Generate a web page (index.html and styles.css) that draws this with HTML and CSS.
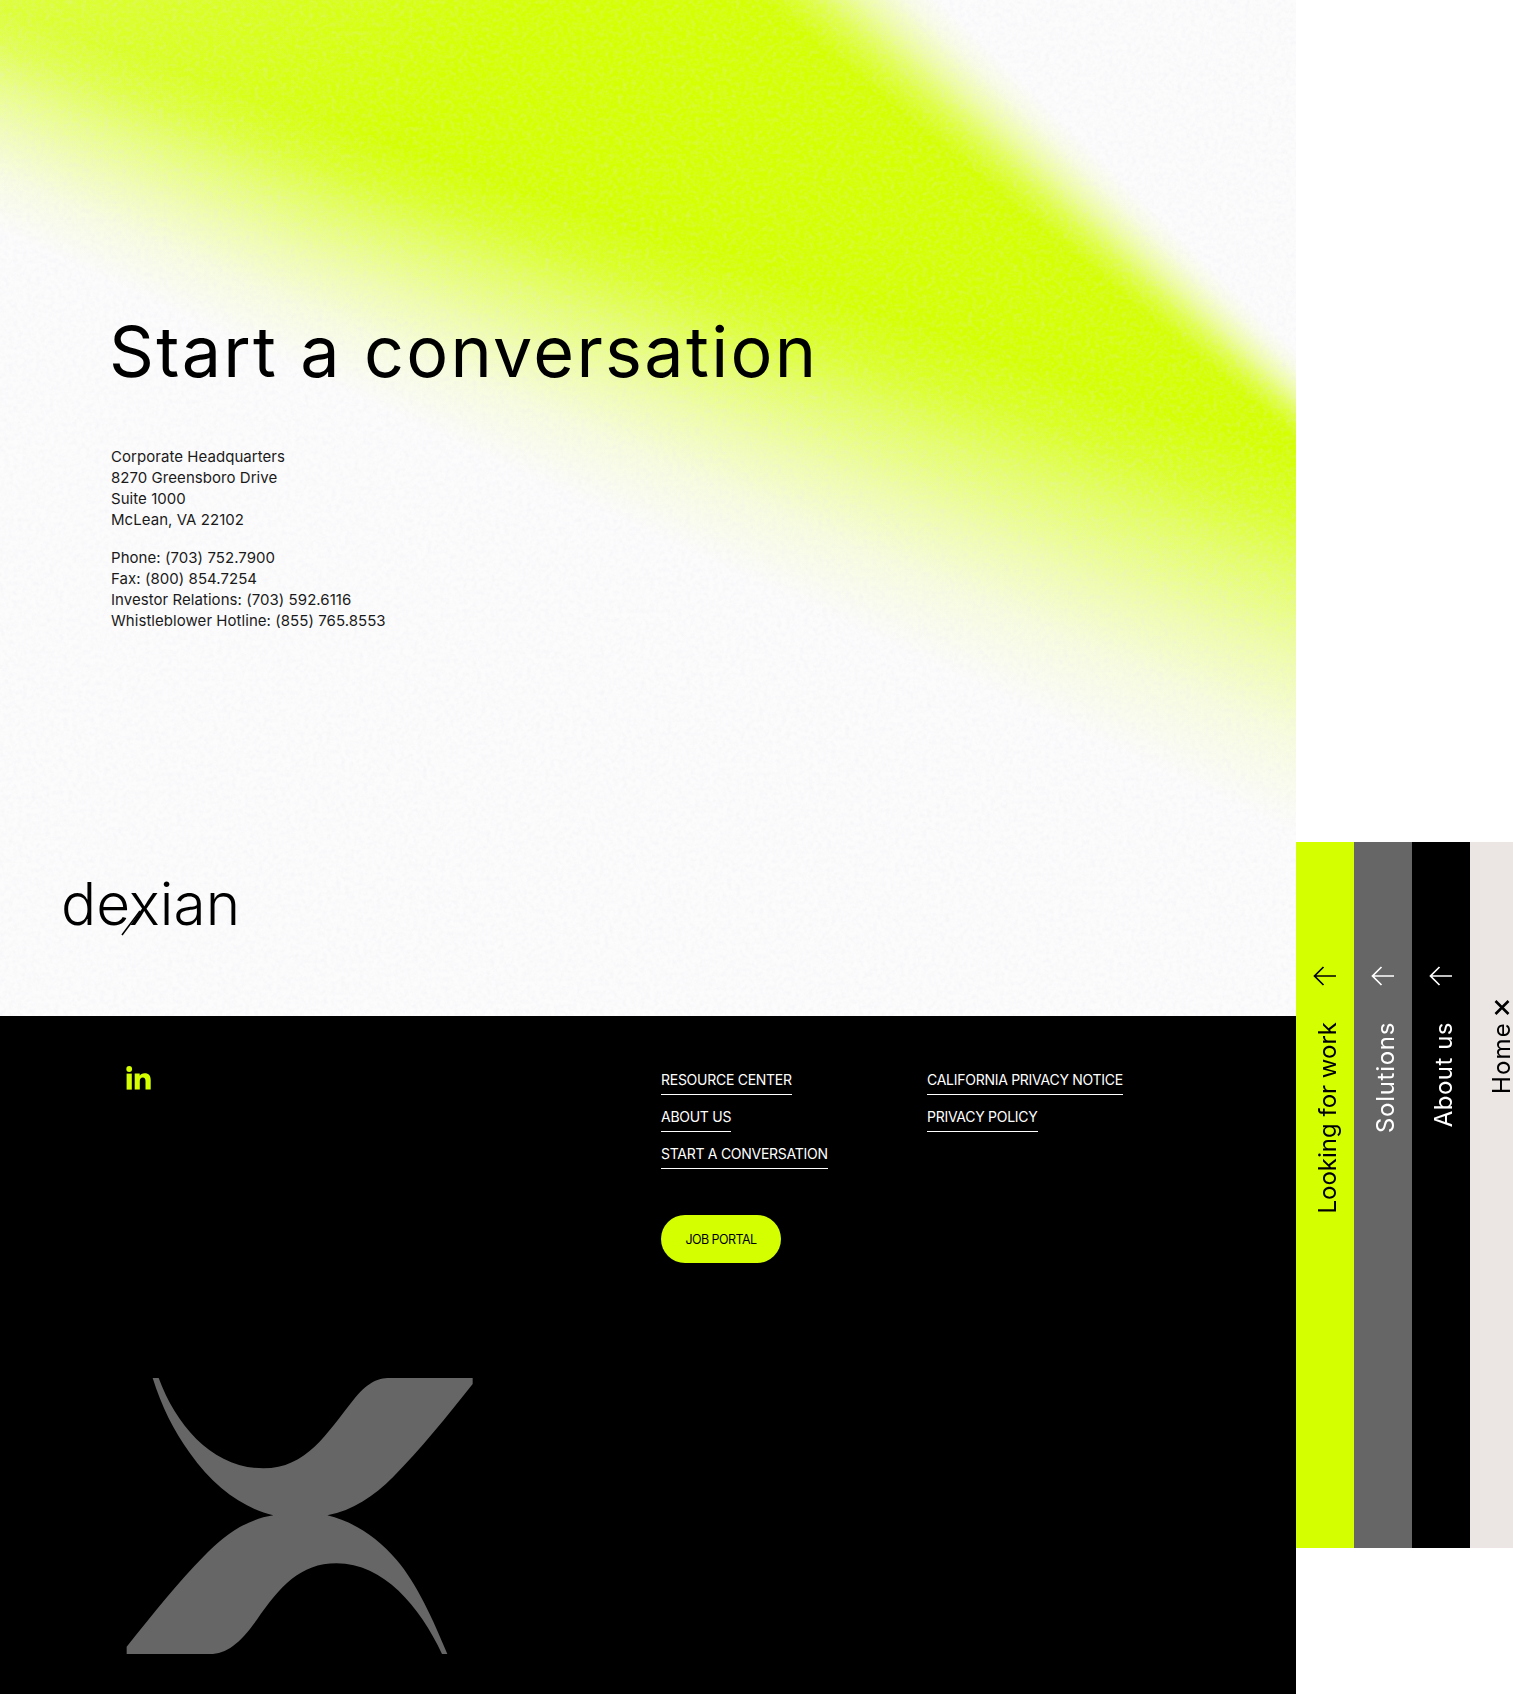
FILE: index.html
```html
<!DOCTYPE html>
<html lang="en">
<head>
<meta charset="utf-8">
<title>Start a conversation | Dexian</title>
<link rel="stylesheet" href="styles.css">
</head>
<body>
<div class="page">
  <main class="main">
    <section class="hero">
      <svg class="grain" aria-hidden="true">
        <filter id="grain-filter" x="0" y="0" width="100%" height="100%">
          <feTurbulence type="fractalNoise" baseFrequency="0.22" numOctaves="3" seed="4"/>
          <feColorMatrix type="matrix" values="0 0 0 0 0.8  0 0 0 0 0.8  0 0 0 0 0.84  0.9 0.9 0 0 -0.72"/>
        </filter>
        <rect width="100%" height="100%" filter="url(#grain-filter)"/>
      </svg>
      <div class="hero-body">
        <h1 class="title">Start a conversation</h1>
        <p class="info">Corporate Headquarters<br>8270 Greensboro Drive<br>Suite 1000<br>McLean, VA 22102</p>
        <p class="info">Phone: (703) 752.7900<br>Fax: (800) 854.7254<br>Investor Relations: (703) 592.6116<br>Whistleblower Hotline: (855) 765.8553</p>
      </div>
      <div class="logo">
        <span class="logo-text">dexian</span>
        <svg class="logo-slash" viewBox="0 0 20 26" aria-hidden="true"><path d="M1 25 L19 1" stroke="#000" stroke-width="1.500" fill="none"/></svg>
      </div>
    </section>
    <footer class="footer">
      <div class="footer-top">
        <a class="social" href="#" aria-label="LinkedIn">
          <svg viewBox="0 0 25 24" width="25" height="24">
            <circle cx="3.2" cy="3" r="2.9" fill="#d4ff00"/>
            <rect x="0.6" y="7.6" width="5.2" height="16" fill="#d4ff00"/>
            <path d="M8.7 7.6h5v2.2c.9-1.600 2.600-2.600 4.900-2.600 4.300 0 6.100 2.600 6.100 6.800v9.600h-5.200v-8.700c0-2.200-.8-3.500-2.700-3.500-2 0-3 1.400-3 3.600v8.600h-5.100z" fill="#d4ff00"/>
          </svg>
        </a>
        <div class="footer-links">
          <ul class="link-col">
            <li><a href="#">RESOURCE CENTER</a></li>
            <li><a href="#">ABOUT US</a></li>
            <li><a href="#">START A CONVERSATION</a></li>
            <li class="cta-row"><a class="cta" href="#">JOB PORTAL</a></li>
          </ul>
          <ul class="link-col">
            <li><a href="#">CALIFORNIA PRIVACY NOTICE</a></li>
            <li><a href="#">PRIVACY POLICY</a></li>
          </ul>
        </div>
      </div>
      <svg class="big-x" viewBox="0 0 1200 930" aria-hidden="true">
        <path d="M158 54 L176 54 C230 200 340 325 490 325 C620 325 680 220 760 120 C800 70 830 54 870 54 L1118 54 L1118 72 C1040 170 960 270 880 350 C820 410 760 450 682 466 C760 485 830 530 890 600 C950 670 1000 780 1042 882 L1026 882 C960 740 850 610 710 610 C600 610 540 680 470 780 C420 850 380 882 330 882 L80 882 L80 860 C160 760 240 660 310 590 C370 530 430 480 520 466 C430 445 340 380 270 280 C220 210 185 140 158 54 Z" fill="#666"/>
      </svg>
    </footer>
  </main>
  <aside class="panels">
    <a class="panel panel-lime" href="#">
      <svg class="arrow" viewBox="0 0 24 20" aria-hidden="true"><path d="M23 10H1.500M10.500 1 1.500 10l9 9" fill="none" stroke="currentColor" stroke-width="1.700"/></svg>
      <span class="panel-label label-work">Looking for work</span>
    </a>
    <a class="panel panel-grey" href="#">
      <svg class="arrow" viewBox="0 0 24 20" aria-hidden="true"><path d="M23 10H1.500M10.500 1 1.500 10l9 9" fill="none" stroke="currentColor" stroke-width="1.700"/></svg>
      <span class="panel-label label-solutions">Solutions</span>
    </a>
    <a class="panel panel-black" href="#">
      <svg class="arrow" viewBox="0 0 24 20" aria-hidden="true"><path d="M23 10H1.500M10.500 1 1.500 10l9 9" fill="none" stroke="currentColor" stroke-width="1.700"/></svg>
      <span class="panel-label label-about">About us</span>
    </a>
    <a class="panel panel-home" href="#">
      <svg class="close" viewBox="0 0 16 15" aria-hidden="true"><path d="M1.500 1l13 13M14.500 1l-13 13" fill="none" stroke="currentColor" stroke-width="2.600"/></svg>
      <span class="panel-label label-home">Home</span>
    </a>
  </aside>
</div>
</body>
</html>
```

FILE: styles.css
```css
* { box-sizing: border-box; }
html, body { margin: 0; padding: 0; background: #fff; }
body {
  font-family: "Inter", "Liberation Sans", sans-serif;
  color: #000;
  overflow-x: hidden;
}
a { color: inherit; text-decoration: none; }
ul { list-style: none; margin: 0; padding: 0; }

.page { display: flex; width: 1513px; height: 1694px; overflow: hidden; }
.main { width: 1296px; flex: none; display: flex; flex-direction: column; }

.hero {
  position: relative;
  height: 1016px;
  padding: 320px 0 0 111px;
  display: flex;
  flex-direction: column;
  justify-content: space-between;
  background-color: #d4ff00;
  background-image:
    conic-gradient(at 1829px 876px,
      rgba(252,252,253,0) 0deg 309.4deg,
      rgba(252,252,253,.28) 310.8deg,
      rgba(252,252,253,.65) 312.2deg,
      rgba(252,252,253,.9) 313.5deg,
      #fcfcfd 314.6deg 360deg),
    conic-gradient(at -1833px -622px,
      rgba(252,252,253,0) 0deg 109deg,
      rgba(252,252,253,.15) 110deg,
      rgba(252,252,253,.4) 111deg,
      rgba(252,252,253,.68) 112.3deg,
      rgba(252,252,253,.88) 113.5deg,
      #fcfcfd 115deg 360deg),
    linear-gradient(135deg, rgba(252,252,253,.22) 0, rgba(252,252,253,0) 380px);
}
.grain { position: absolute; inset: 0; width: 100%; height: 100%; opacity: .4; pointer-events: none; }
.hero-body { position: relative; }
.title {
  margin: 0 0 62px -2px;
  font-size: 70px;
  line-height: 64px;
  font-weight: 400;
  letter-spacing: 2.3px;
}
.info {
  margin: 0 0 17px;
  font-size: 15px;
  line-height: 21px;
  color: #1a1a1a;
  letter-spacing: .05px;
}

.logo { position: relative; margin: 0 0 82px -50px; width: 180px; height: 60px; }
.logo-text {
  display: block;
  font-size: 58.500px;
  line-height: 60px;
  font-weight: 300;
  letter-spacing: 0;
}
.logo-slash { position: absolute; left: 59.500px; top: 36px; width: 20px; height: 26px; overflow: visible; }

.footer {
  background: #000;
  color: #fff;
  height: 678px;
  padding: 50px 0 0;
  display: flex;
  flex-direction: column;
  justify-content: space-between;
}
.footer-top { display: flex; }
.social { display: block; width: 25px; height: 24px; margin-left: 126px; }
.social svg { display: block; }
.footer-links { display: grid; grid-template-columns: 266px auto; margin-left: 510px; }
.link-col { display: flex; flex-direction: column; gap: 8px; }
.link-col li { display: flex; }
.link-col a:not(.cta) {
  display: block;
  font-size: 14px;
  line-height: 18px;
  padding: 5px 0 5px;
  border-bottom: 1px solid #fff;
  height: 29px;
  letter-spacing: -.27px;
}
.cta-row { margin-top: 38px; }
.cta {
  display: flex;
  align-items: center;
  justify-content: center;
  width: 120px;
  height: 48px;
  border-radius: 24px;
  background: #d4ff00;
  color: #000;
  font-size: 12.500px;
  letter-spacing: -.55px;
}
.big-x { display: block; width: 400px; height: 310px; margin: 0 0 24px 100px; }

.panels { display: flex; flex: none; width: 217px; height: 706px; margin-top: 842px; }
.panel {
  flex: none;
  width: 58px;
  padding-top: 124px;
  display: flex;
  flex-direction: column;
  align-items: center;
}
.panel-lime { background: #d4ff00; color: #000; }
.panel-grey { background: #666; color: #fff; }
.panel-black { background: #000; color: #fff; }
.panel-home { background: #ebe6e3; color: #000; width: 43px; padding-top: 158px; padding-left: 20px; }
.arrow { display: block; width: 24px; height: 20px; margin-bottom: 36px; }
.close { display: block; width: 16px; height: 15px; margin-bottom: 7px; flex: none; }
.panel-label {
  writing-mode: vertical-rl;
  transform: rotate(180deg);
  font-size: 24px;
  line-height: 28px;
  white-space: nowrap;
  margin-left: 5px;
}
.label-work { letter-spacing: 0; }
.label-solutions { letter-spacing: .7px; }
.label-about { letter-spacing: .5px; }
.label-home { letter-spacing: 1.2px; margin-left: 0; line-height: 20px; }
```
